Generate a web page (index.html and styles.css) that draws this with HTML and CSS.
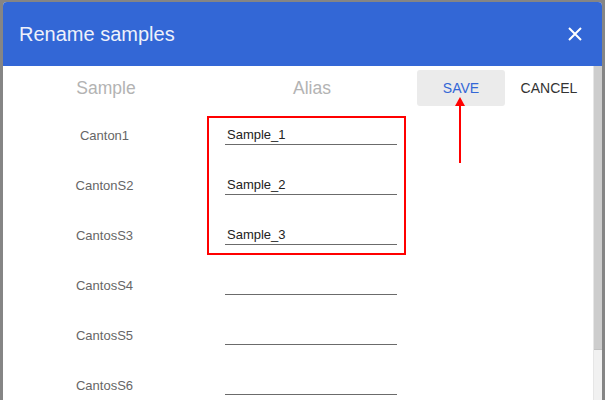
FILE: index.html
```html
<!DOCTYPE html>
<html lang="en">
<head>
<meta charset="utf-8">
<title>Rename samples</title>
<link rel="stylesheet" href="styles.css">
</head>
<body>
<div class="backdrop">
  <div class="dialog">
    <div class="dialog-header">
      <h1 class="dialog-title">Rename samples</h1>
      <svg class="close-icon" width="14" height="14" viewBox="0 0 14 14">
        <path d="M1 1 L13 13 M13 1 L1 13" stroke="#ffffff" stroke-width="2" fill="none"/>
      </svg>
    </div>
    <div class="dialog-body">
      <div class="content">
        <div class="head-row">
          <div class="col-title">Sample</div>
          <div class="col-title">Alias</div>
          <div class="actions">
            <button class="btn btn-save">SAVE</button>
            <button class="btn btn-cancel">CANCEL</button>
          </div>
        </div>
        <div class="row"><div class="name">Canton1</div><div class="alias"><input class="alias-input" value="Sample_1"></div></div>
        <div class="row"><div class="name">CantonS2</div><div class="alias"><input class="alias-input" value="Sample_2"></div></div>
        <div class="row"><div class="name">CantosS3</div><div class="alias"><input class="alias-input" value="Sample_3"></div></div>
        <div class="row"><div class="name">CantosS4</div><div class="alias"><input class="alias-input" value=""></div></div>
        <div class="row"><div class="name">CantosS5</div><div class="alias"><input class="alias-input" value=""></div></div>
        <div class="row"><div class="name">CantosS6</div><div class="alias"><input class="alias-input" value=""></div></div>
        <div class="highlight-box"></div>
        <svg class="arrow" width="12" height="68" viewBox="0 0 12 68">
          <polygon points="6,0 11,9 1,9" fill="#ff0000"/>
          <rect x="5" y="8" width="2" height="58" fill="#ff0000"/>
        </svg>
      </div>
      <div class="scrollbar"><div class="thumb"></div></div>
    </div>
  </div>
</div>
</body>
</html>
```

FILE: styles.css
```css
html, body {
  margin: 0;
  padding: 0;
}
body {
  width: 605px;
  height: 400px;
  overflow: hidden;
  background: #858585;
  font-family: "Liberation Sans", Arial, sans-serif;
}
.backdrop {
  padding: 2px 0 0 3px;
  height: 398px;
}
.dialog {
  width: 599px;
  height: 398px;
  background: #ffffff;
  border-radius: 4px 4px 0 0;
  overflow: hidden;
  display: flex;
  flex-direction: column;
}
.dialog-header {
  height: 64px;
  flex: none;
  background: #3367d6;
  display: flex;
  align-items: center;
  justify-content: space-between;
  padding: 0 20px 0 16px;
}
.dialog-title {
  margin: 0;
  font-weight: normal;
  font-size: 20px;
  color: #eef1fb;
}
.close-icon {
  display: block;
}
.dialog-body {
  flex: 1;
  display: flex;
  min-height: 0;
}
.content {
  flex: 1;
  position: relative;
}
.head-row {
  height: 44px;
  display: grid;
  grid-template-columns: 206px 204px 1fr;
  align-items: center;
}
.col-title {
  text-align: center;
  font-size: 17.5px;
  color: #b3b3b3;
}
.col-title + .col-title {
  padding-left: 2px;
}
.actions {
  display: flex;
  padding-left: 4px;
}
.btn {
  width: 88px;
  height: 36px;
  border: none;
  border-radius: 3px;
  background: transparent;
  font-family: "Liberation Sans", Arial, sans-serif;
  font-size: 14px;
  padding: 0;
}
.btn-save {
  background: #ebebeb;
  color: #3367d6;
}
.btn-cancel {
  color: #333333;
}
.row {
  height: 50px;
  display: grid;
  grid-template-columns: 206px 204px;
  align-items: center;
}
.name {
  text-align: center;
  font-size: 13px;
  color: #666666;
  padding-right: 3px;
}
.alias {
  display: flex;
  justify-content: center;
}
.alias-input {
  width: 170px;
  height: 19px;
  box-sizing: content-box;
  border: none;
  border-bottom: 1px solid #6b6b6b;
  padding: 0 0 0 2px;
  margin: 0;
  font-family: "Liberation Sans", Arial, sans-serif;
  font-size: 13px;
  color: #222222;
  outline: none;
  background: transparent;
}
.highlight-box {
  position: absolute;
  left: 204px;
  top: 50px;
  width: 195px;
  height: 135px;
  border: 2px solid #ff0000;
}
.arrow {
  position: absolute;
  left: 451px;
  top: 31px;
}
.scrollbar {
  width: 10px;
  flex: none;
  background: #f1f1f1;
  border-left: 1px solid #e6e6e6;
  box-sizing: border-box;
}
.thumb {
  height: 283px;
  background: #cdcdcd;
  border-bottom: 1px solid #c2c2c2;
}
```
